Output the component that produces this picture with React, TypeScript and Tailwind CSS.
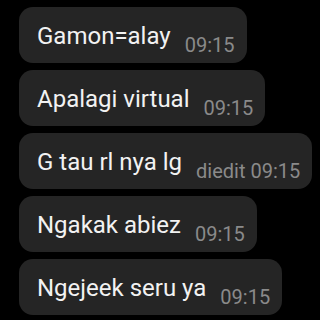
const messages = [
  { text: "Gamon=alay", time: "09:15" },
  { text: "Apalagi virtual", time: "09:15" },
  { text: "G tau rl nya lg", time: "diedit 09:15" },
  { text: "Ngakak abiez", time: "09:15" },
  { text: "Ngejeek seru ya", time: "09:15" },
];

export default function App() {
  return (
    <div className="flex h-[320px] w-[320px] flex-col gap-[7px] overflow-hidden bg-black px-[19px] pt-[7px] font-['Roboto',sans-serif]">
      {messages.map((m) => (
        <div
          key={m.text}
          className="flex h-[56px] w-fit shrink-0 items-start rounded-[14px] bg-[#252525] pl-[18px] pr-[12px]"
        >
          <span className="mt-[15px] whitespace-nowrap text-[24px] leading-[28px] text-[#f2f2f2]">
            {m.text}
          </span>
          <span className="ml-[14px] mt-[26px] whitespace-nowrap text-[20px] leading-[24px] text-[#8a8a8a]">
            {m.time}
          </span>
        </div>
      ))}
    </div>
  );
}
